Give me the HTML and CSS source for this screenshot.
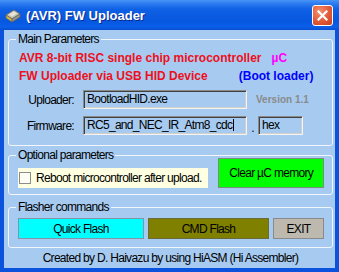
FILE: index.html
```html
<!DOCTYPE html>
<html lang="en">
<head>
    <meta charset="UTF-8">
    <title>(AVR) FW Uploader</title>
    <link rel="stylesheet" href="styles.css">
</head>
<body>

    <div class="window">
        <div class="titlebar">
            <svg class="app-icon" width="16" height="16" viewBox="0 0 16 16">
                <path d="M1 7 L9 2 L15 6 L7 11 Z" fill="#c8c4b8" stroke="#6a6658" stroke-width="0.8"/>
                <path d="M1 7 L7 11 L7 14 L1 10 Z" fill="#d8b848" stroke="#6a6658" stroke-width="0.8"/>
                <path d="M7 11 L15 6 L15 9 L7 14 Z" fill="#9a9688" stroke="#6a6658" stroke-width="0.8"/>
                <path d="M4 6.5 L9 3.5 L12 5.5 L7 8.5 Z" fill="#e8e4d8"/>
            </svg>
            <span class="title">(AVR) FW Uploader</span>
            <div class="close-btn">
                <svg width="11" height="11" viewBox="0 0 11 11">
                    <path d="M1.5 1.5 L9.5 9.5 M9.5 1.5 L1.5 9.5" stroke="#fff" stroke-width="2.2" stroke-linecap="square"/>
                </svg>
            </div>
        </div>

        <div class="client">
            <div class="group main-group">
                <span class="caption">Main Parameters</span>
                <div class="info-row">
                    <span class="red">AVR 8-bit RISC single chip microcontroller</span>
                    <span class="mag">µC</span>
                </div>
                <div class="info-row">
                    <span class="red">FW Uploader via USB HID Device</span>
                    <span class="blue">(Boot loader)</span>
                </div>
                <div class="field-row">
                    <label>Uploader:</label>
                    <div class="edit wide">BootloadHID.exe</div>
                    <span class="version">Version 1.1</span>
                </div>
                <div class="field-row second">
                    <label>Firmware:</label>
                    <div class="edit wide">RC5_and_NEC_IR_Atm8_cdc<span class="caret"></span></div>
                    <span class="dot">.</span>
                    <div class="edit ext">hex</div>
                </div>
            </div>

            <div class="group opt-group">
                <span class="caption">Optional parameters</span>
                <div class="reboot">
                    <span class="checkbox"></span>
                    <span>Reboot microcontroller after upload.</span>
                </div>
                <button class="clear-btn">Clear µC memory</button>
            </div>

            <div class="group flash-group">
                <span class="caption">Flasher commands</span>
                <button class="cmd quick">Quick Flash</button>
                <button class="cmd cmdflash">CMD Flash</button>
                <button class="cmd exit">EXIT</button>
            </div>

            <div class="footer">Created by D. Haivazu by using HiASM (Hi Assembler)</div>
        </div>
    </div>

</body>
</html>
```

FILE: styles.css
```css
* {
    box-sizing: border-box;
}

body {
    margin: 0;
    background: #a6caf0;
    font-family: 'Liberation Sans', Arial, sans-serif;
    font-size: 12px;
    letter-spacing: -0.7px;
    color: #000;
}

.window {
    width: 339px;
    height: 272px;
    display: flex;
    flex-direction: column;
    background: #0b52dc;
}

/* --- title bar --- */
.titlebar {
    height: 30px;
    display: flex;
    align-items: center;
    padding: 0 6px 0 5px;
    background: linear-gradient(to bottom, #4a94f6 0%, #2c7bf0 12%, #0e60e4 32%, #0757e0 70%, #0a5fe8 90%, #0a4dd0 100%);
}
.app-icon { margin-right: 5px; margin-top: 1px; }
.title {
    flex: 1;
    color: #fff;
    font-weight: bold;
    font-size: 13px;
    letter-spacing: 0;
    text-shadow: 1px 1px 0 #0a2a8a;
}
.close-btn {
    width: 21px; height: 21px;
    border: 1px solid #fff;
    border-radius: 3px;
    background: radial-gradient(circle at 35% 30%, #f49070 0%, #e05a38 55%, #c8401e 100%);
    display: flex; align-items: center; justify-content: center;
}

/* --- client area --- */
.client {
    flex: 1;
    margin: 0 4px 4px 4px;
    padding: 9px 2px 0 4px;
    background: #a6caf0;
    display: flex;
    flex-direction: column;
}

.group {
    position: relative;
    border: 1px solid #f2f5fa;
    border-radius: 3px;
}
.caption {
    position: absolute;
    top: -8px; left: 7px;
    padding: 0 2px;
    line-height: 15px;
    background: #a6caf0;
}

.main-group { height: 107px; padding: 10px 0 0 10px; }

.info-row {
    display: flex;
    height: 16px;
    line-height: 16px;
    margin-bottom: 2px;
    font-weight: bold;
    font-size: 12px;
    letter-spacing: 0;
}
.red { color: #ee1020; }
.mag { color: #ff00ff; margin-left: 10px; }
.blue { color: #0000ff; margin-left: 31px; }

.field-row {
    display: flex;
    align-items: center;
    height: 19px;
    margin-top: 6px;
}
.field-row.second { margin-top: 7px; }
.field-row label {
    width: 55px;
    text-align: right;
    margin-right: 9px;
}
.edit {
    height: 19px;
    line-height: 16px;
    padding-left: 3px;
    white-space: nowrap;
    overflow: hidden;
    border: 1px solid;
    border-color: #8a8a8a #f4f4f4 #f4f4f4 #8a8a8a;
    box-shadow: inset 1px 1px 0 #404040, inset -1px -1px 0 #d4d0c8;
}
.edit.wide { width: 164px; }
.edit.ext { width: 45px; }
.caret {
    display: inline-block;
    width: 1px; height: 12px;
    margin-left: 1px;
    background: #000;
    vertical-align: -2px;
}
.version {
    margin-left: 9px;
    color: #8a8a8a;
    font-weight: bold;
    font-size: 10px;
    letter-spacing: 0;
}
.dot {
    width: 11px;
    height: 19px;
    line-height: 24px;
    text-align: center;
}

.opt-group {
    margin-top: 9px;
    height: 40px;
    padding: 2px 8px 0 9px;
    display: flex;
    align-items: flex-start;
    gap: 10px;
}
.reboot {
    width: 191px;
    height: 20px;
    margin-top: 10px;
    padding-left: 1px;
    background: #ffffe1;
    display: flex;
    align-items: center;
    white-space: nowrap;
}
.checkbox {
    width: 12px; height: 12px;
    margin-right: 5px;
    border: 1px solid #8c8c8c;
    background: #fdfdf4;
}
.clear-btn {
    width: 106px;
    height: 30px;
    background: #00ff00;
    border: 1px solid #7c8c7c;
    font-family: inherit;
    font-size: inherit;
    letter-spacing: inherit;
    padding: 0;
}

.flash-group {
    margin-top: 12px;
    height: 41px;
    padding: 10px 0 0 9px;
    display: flex;
    align-items: flex-start;
    gap: 4px;
}
.cmd {
    height: 21px;
    padding: 0;
    font-family: inherit;
    font-size: inherit;
    letter-spacing: inherit;
    border: 1px solid #8294aa;
}
.quick { width: 126px; background: #00ffff; }
.cmdflash { width: 121px; background: #808000; border-color: #6a6a3a; }
.exit { width: 51px; background: #bdb9ae; border-color: #8a8a8a; }

.footer {
    flex: 1;
    display: flex;
    align-items: center;
    justify-content: center;
}
```
